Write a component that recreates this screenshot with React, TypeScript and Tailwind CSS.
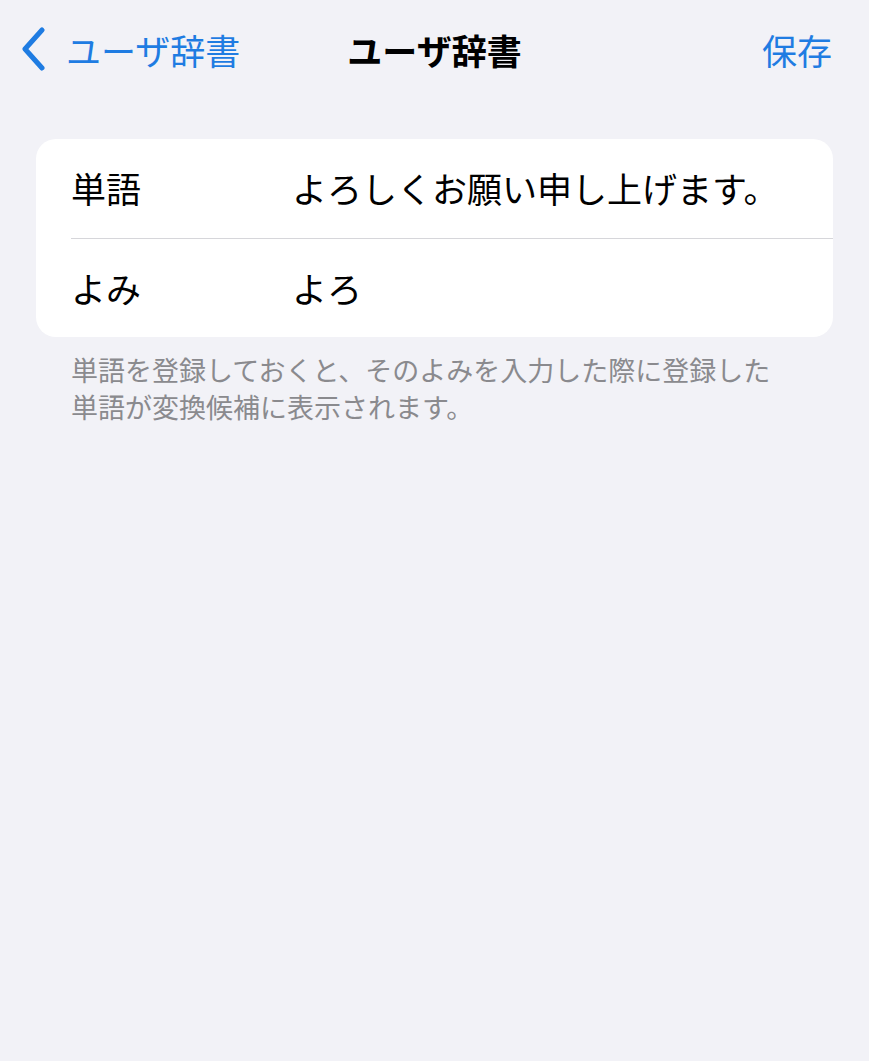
import React from "react";

const font = "font-['Noto_Sans_CJK_JP','Noto_Sans',sans-serif]";

const rows = [
    { label: "単語", value: "よろしくお願い申し上げます。" },
    { label: "よみ", value: "よろ" },
];

const App = () => {
    return (
        <div className={`min-h-[1061px] w-full bg-[#f2f2f7] ${font}`}>
            {/* nav bar */}
            <div className="relative flex h-[100px] items-center justify-between pl-[20px] pr-[37px] pb-[2px]">
                <button className="flex items-center gap-[20px] text-[#1f7ce2]">
                    <svg width="26" height="44" viewBox="0 0 26 44" fill="none">
                        <path d="M22 3 L5 22 L22 41" stroke="currentColor" strokeWidth="5" strokeLinecap="round" strokeLinejoin="round" />
                    </svg>
                    <span className="text-[35px] leading-none">ユーザ辞書</span>
                </button>
                <h1 className="absolute left-1/2 top-[32px] -translate-x-1/2 text-[35px] font-bold leading-none text-black">ユーザ辞書</h1>
                <button className="text-[35px] leading-none text-[#1f7ce2]">保存</button>
            </div>

            <div className="px-[36px] pt-[39px]">
                <div className="overflow-hidden rounded-[20px] bg-white">
                    {rows.map((row, index) => (
                        <div key={index} className="pl-[35px]">
                            <div className={`flex h-[99px] items-center ${index > 0 ? "border-t border-[#d6d6da]" : ""}`}>
                                <span className="w-[221px] text-[35px] text-black">{row.label}</span>
                                <span className="text-[35px] text-black">{row.value}</span>
                            </div>
                        </div>
                    ))}
                </div>
                <p className="mt-[14px] pl-[35px] text-[27px] leading-[37px] text-[#8a8a8e]">
                    単語を登録しておくと、そのよみを入力した際に登録した
                    <br />
                    単語が変換候補に表示されます。
                </p>
            </div>
        </div>
    );
};

export default App;
